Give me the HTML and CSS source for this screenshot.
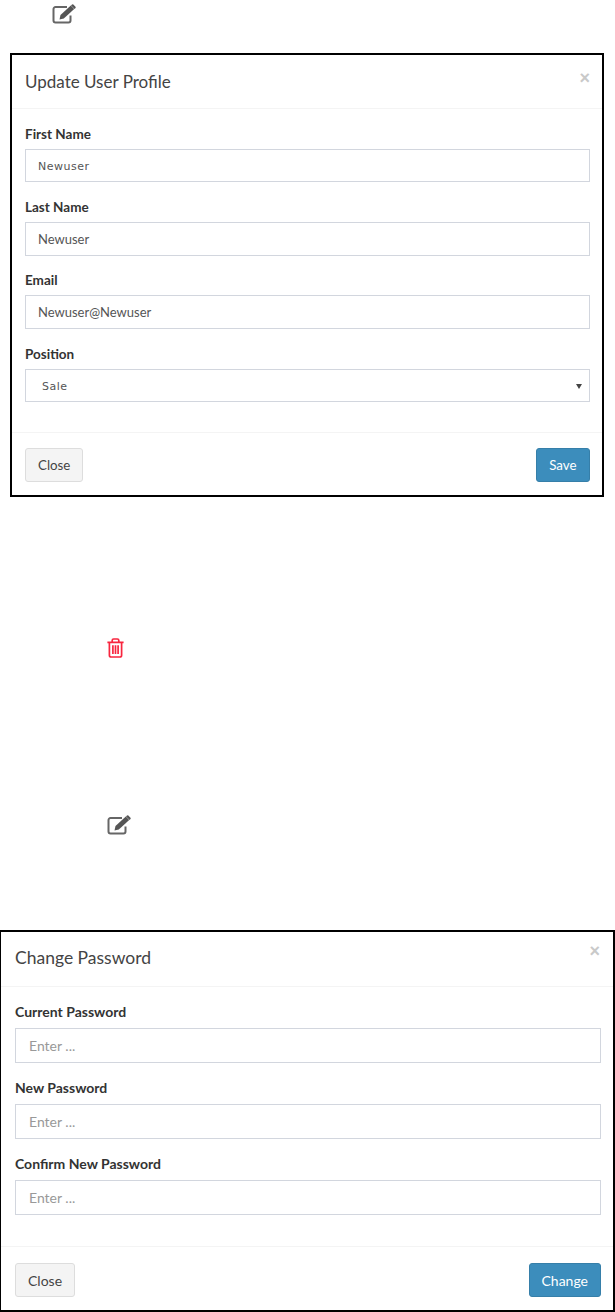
FILE: index.html
```html
<!DOCTYPE html>
<html lang="en">
<head>
<meta charset="utf-8">
<title>User Profile</title>
<link rel="stylesheet" href="styles.css">
</head>
<body>
<div class="icon-row icon-row-top">
  <svg class="icon-edit" viewBox="0 0 25 20" aria-hidden="true"><path class="edit-box" d="M18.5 11.5v5a2 2 0 0 1-2 2H3.5a2 2 0 0 1-2-2V5a2 2 0 0 1 2-2H15"/><path class="edit-pencil" d="M8.5 11 18.8 1.6l3.4 3.3L11.8 14.6l-4.3.9z"/><path class="edit-tip" d="M20 .6a1 1 0 0 1 1.3 0l2.2 2.1a1 1 0 0 1 0 1.3L22.6 4.9 19 1.5z"/></svg>
</div>
<section class="modal modal-profile">
  <header class="modal-head">
    <h2 class="modal-title">Update User Profile</h2>
    <span class="modal-close">×</span>
  </header>
  <div class="modal-body">
    <div class="field">
      <label class="field-label">First Name</label>
      <div class="input input-small">Newuser</div>
    </div>
    <div class="field">
      <label class="field-label">Last Name</label>
      <div class="input">Newuser</div>
    </div>
    <div class="field">
      <label class="field-label">Email</label>
      <div class="input">Newuser@Newuser</div>
    </div>
    <div class="field field-position">
      <label class="field-label">Position</label>
      <div class="input input-small input-select">Sale<span class="caret"></span></div>
    </div>
  </div>
  <footer class="modal-foot">
    <button class="btn btn-default">Close</button>
    <button class="btn btn-primary">Save</button>
  </footer>
</section>
<div class="icon-row icon-row-trash">
  <svg class="icon-trash" viewBox="0 0 17 20" aria-hidden="true"><path class="trash-line" d="M.4 4.4h16.2M2.4 4.4v12.8a1.8 1.8 0 0 0 1.8 1.8h8.6a1.8 1.8 0 0 0 1.8-1.8V4.4M5.2 4.4V2.4A1.4 1.4 0 0 1 6.6 1h3.8a1.4 1.4 0 0 1 1.4 1.4v2M5.9 7.2v8.8M8.5 7.2v8.8M11.1 7.2v8.8"/></svg>
</div>
<div class="icon-row icon-row-edit">
  <svg class="icon-edit" viewBox="0 0 25 20" aria-hidden="true"><path class="edit-box" d="M18.5 11.5v5a2 2 0 0 1-2 2H3.5a2 2 0 0 1-2-2V5a2 2 0 0 1 2-2H15"/><path class="edit-pencil" d="M8.5 11 18.8 1.6l3.4 3.3L11.8 14.6l-4.3.9z"/><path class="edit-tip" d="M20 .6a1 1 0 0 1 1.3 0l2.2 2.1a1 1 0 0 1 0 1.3L22.6 4.9 19 1.5z"/></svg>
</div>
<section class="modal modal-password">
  <header class="modal-head">
    <h2 class="modal-title">Change Password</h2>
    <span class="modal-close">×</span>
  </header>
  <div class="modal-body">
    <div class="field">
      <label class="field-label">Current Password</label>
      <div class="input input-empty">Enter ...</div>
    </div>
    <div class="field">
      <label class="field-label">New Password</label>
      <div class="input input-empty">Enter ...</div>
    </div>
    <div class="field">
      <label class="field-label">Confirm New Password</label>
      <div class="input input-empty">Enter ...</div>
    </div>
  </div>
  <footer class="modal-foot">
    <button class="btn btn-default">Close</button>
    <button class="btn btn-primary">Change</button>
  </footer>
</section>
</body>
</html>
```
FILE: styles.css
```css
* { box-sizing: border-box; }
html, body { margin: 0; padding: 0; background: #fff; }
body { width: 615px; height: 1312px; overflow: hidden; font-family: Lato, "Liberation Sans", sans-serif; color: #333; }

.icon-row { display: flex; }
.icon-row-top { height: 53px; padding: 4px 0 0 52px; }
.icon-row-trash { height: 318px; padding: 141px 0 0 107px; }
.icon-row-edit { height: 115px; padding: 0 0 0 107px; }
.icon-edit { width: 25px; height: 20px; display: block; }
.icon-trash { width: 17px; height: 20px; display: block; }
.edit-box { fill: none; stroke: #666; stroke-width: 2; }
.edit-pencil, .edit-tip { fill: #555; }
.trash-line { fill: none; stroke: #f8263f; stroke-width: 1.7; }

.modal { border: 2px solid #000; background: #fff; }
.modal-profile { margin-left: 10px; width: 594px; height: 444px; }
.modal-password { width: 615px; height: 382px; border-left-width: 1px; }

.modal-head { display: flex; justify-content: space-between; align-items: flex-start; border-bottom: 1px solid #f4f4f4; }
.modal-title { margin: 0; font-weight: 400; color: #444; }
.modal-close { color: #c9c9c9; font-weight: 700; font-family: "Liberation Sans", sans-serif; line-height: 1; }
.modal-profile .modal-head { height: 54px; padding: 15px 12px 15px 13px; }
.modal-profile .modal-title { font-size: 17px; line-height: 24px; }
.modal-profile .modal-close { font-size: 18px; margin-top: -1px; }
.modal-password .modal-head { height: 55px; padding: 13px 13px 0 14px; }
.modal-password .modal-title { font-size: 17.5px; line-height: 26px; }
.modal-password .modal-close { font-size: 18px; margin-top: -3px; }

.field-label { display: block; font-weight: 700; color: #333; }
.input { border: 1px solid #d2d6de; background: #fff; color: #555; display: flex; align-items: center; }
.input-small { font-family: "DejaVu Sans", sans-serif; }
.input-empty { color: #999; }
.input-select { position: relative; }
.caret { position: absolute; right: 7px; top: 14px; border-style: solid; border-width: 5px 3px 0; border-color: #444 transparent transparent; }

.modal-profile .modal-body { padding: 16px 12px 0 13px; height: 323px; }
.modal-profile .field { margin-bottom: 15px; }
.modal-profile .field-position { margin-top: 16px; }
.modal-profile .field-label { font-size: 13.5px; line-height: 18px; margin-bottom: 6px; }
.modal-profile .input { height: 34px; padding-left: 12px; font-size: 13px; }
.modal-profile .input-small { height: 33px; margin-bottom: 16px; padding-top: 1px; font-size: 11px; letter-spacing: .5px; }
.modal-profile .input-select { padding-left: 16px; }

.modal-password .modal-body { padding: 16px 12px 0 14px; height: 259px; }
.modal-password .field { margin-bottom: 16px; }
.modal-password .field-label { font-size: 14px; line-height: 18px; margin-bottom: 7px; }
.modal-password .input { height: 35px; padding-left: 13px; font-size: 14px; }

.modal-foot { display: flex; justify-content: space-between; border-top: 1px solid #f4f4f4; }
.modal-profile .modal-foot { padding: 15px 12px 15px 13px; }
.modal-password .modal-foot { padding: 16px 12px 0 14px; }

.btn { height: 34px; border-radius: 3px; border: 1px solid; font-family: inherit; font-size: 14px; padding: 0 12px; }
.modal-profile .btn { font-size: 13.3px; }
.modal-profile .btn-primary { padding: 0 12.5px; }
.btn-default { background: #f4f4f4; border-color: #ddd; color: #444; }
.btn-primary { background: #3c8dbc; border-color: #367fa9; color: #fff; }
```
